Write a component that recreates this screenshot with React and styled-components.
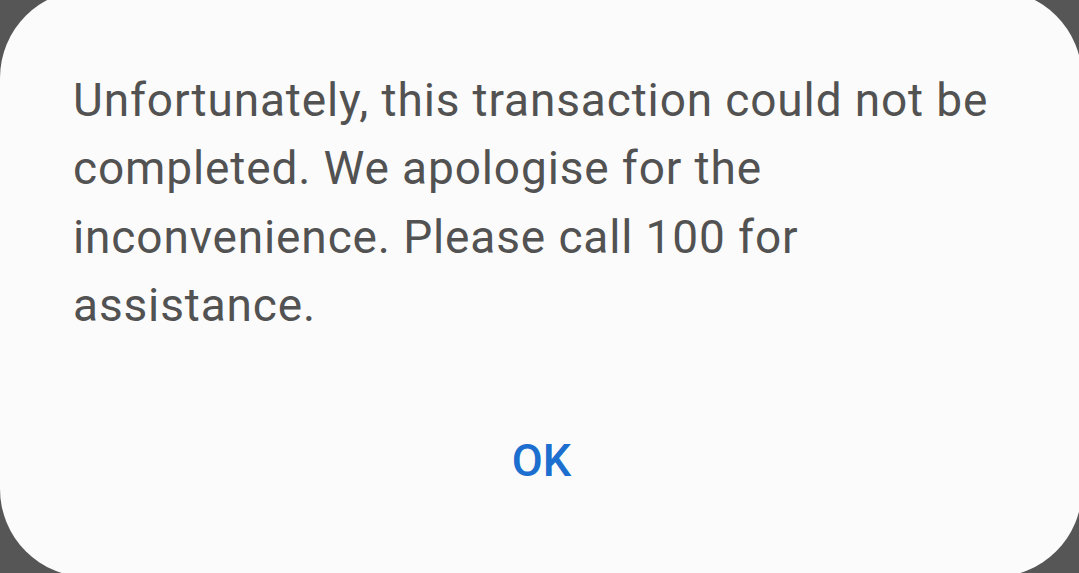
import React from "react";
import styled, { createGlobalStyle } from "styled-components";

const GlobalStyle = createGlobalStyle`
  html, body {
    margin: 0;
    padding: 0;
    background: #565656;
    overflow: hidden;
  }
  body {
    font-family: Roboto, "Liberation Sans", sans-serif;
  }
`;

const Screen = styled.div`
  width: 1079px;
  height: 573px;
  overflow: hidden;
  background: #565656;
`;

const Dialog = styled.div`
  box-sizing: border-box;
  width: 1082px;
  height: 587px;
  margin-top: -10px;
  background: #fbfbfb;
  border-radius: 88px;
  padding: 76px 72px 0 73px;
  display: flex;
  flex-direction: column;
`;

const Message = styled.p`
  margin: 0;
  font-size: 46px;
  line-height: 68.3px;
  color: #525252;
  letter-spacing: 0.87px;
  white-space: nowrap;
`;

const Actions = styled.div`
  display: flex;
  justify-content: center;
  margin-top: 88px;
`;

const TextButton = styled.button`
  border: none;
  background: none;
  padding: 0;
  font-family: Roboto, "Liberation Sans", sans-serif;
  font-size: 45px;
  font-weight: 500;
  line-height: 68px;
  color: #1c6fcf;
  cursor: pointer;
`;

function App() {
  return (
    <>
      <GlobalStyle />
      <Screen>
        <Dialog>
          <Message>
            Unfortunately, this transaction could not be<br />
            completed. We apologise for the<br />
            inconvenience. Please call 100 for<br />
            assistance.
          </Message>
          <Actions>
            <TextButton>OK</TextButton>
          </Actions>
        </Dialog>
      </Screen>
    </>
  );
}

export default App;
